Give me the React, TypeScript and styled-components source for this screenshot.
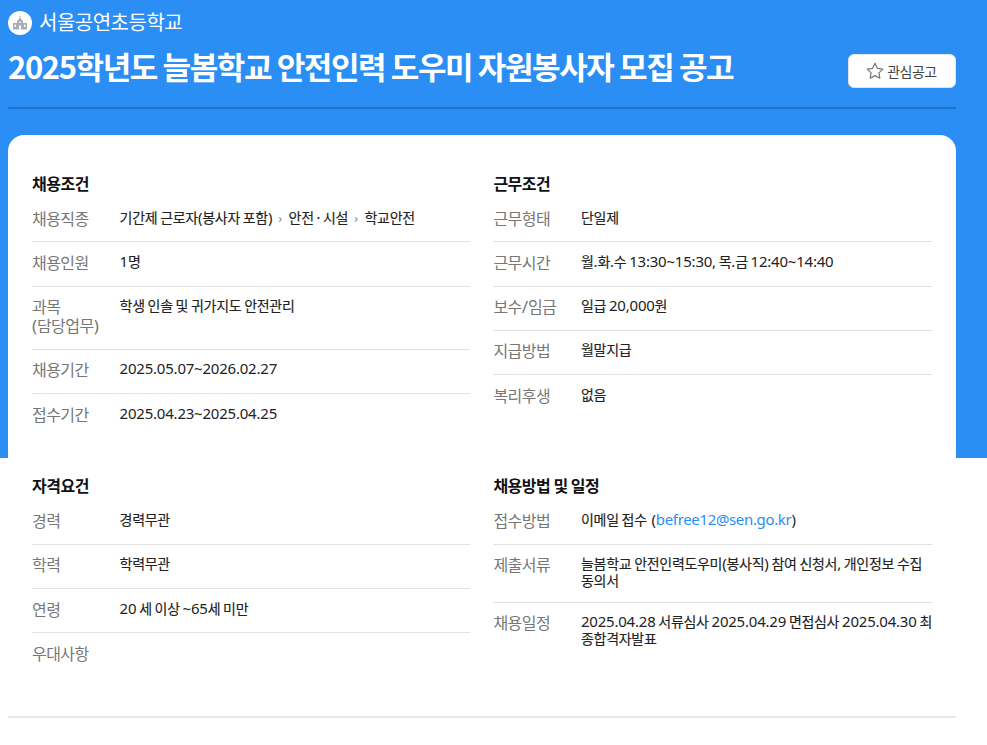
import React from 'react';
import styled, { createGlobalStyle } from 'styled-components';

const GlobalStyle = createGlobalStyle`
html, body {
    margin: 0;
    padding: 0;
}
body {
    background: linear-gradient(#2b8ef4 458px, #fff 458px);
    font-family: "Noto Sans CJK KR", "Noto Sans", sans-serif;
    color: #222;
}
a {
    color: inherit;
    text-decoration: none;
}
`;
const Page = styled.div`
    width: 948px;
    height: 745px;
    margin-left: 8px;
    overflow: hidden;
`;
const SchoolRow = styled.div`
    display: flex;
    align-items: center;
    gap: 7px;
    height: 24px;
    padding-top: 11px;
`;
const SchoolBadge = styled.span`
    width: 24px;
    height: 24px;
    border-radius: 50%;
    background: #fff;
    display: flex;
    align-items: center;
    justify-content: center;
`;
const SchoolName = styled.span`
    color: #fff;
    font-size: 20px;
    letter-spacing: -0.5px;
    line-height: 22px;
    margin-top: -2px;
`;
const TitleRow = styled.div`
    display: flex;
    justify-content: space-between;
    align-items: flex-start;
    height: 64px;
    padding-top: 8px;
    border-bottom: 2px solid #1c74ce;
`;
const Title = styled.h1`
    margin: 0;
    color: #fff;
    font-size: 31px;
    font-weight: 700;
    letter-spacing: -1.4px;
    line-height: 46px;
`;
const FavButton = styled.button`
    width: 108px;
    height: 34px;
    margin-top: 11px;
    border: 1px solid #e3e3e3;
    border-radius: 6px;
    background: #fff;
    color: #444;
    font: 400 14px "Noto Sans CJK KR", sans-serif;
    letter-spacing: -0.5px;
    display: flex;
    align-items: center;
    justify-content: center;
    gap: 2px;
    padding: 0 2px 1px 0;
`;
const Card = styled.div`
    margin-top: 26px;
    background: #fff;
    border-radius: 16px 16px 0 0;
`;
const Grid = styled.div`
    display: grid;
    grid-template-columns: 438px 438.6px;
    column-gap: 23.4px;
    align-content: start;
    padding: 36px 24px 0;
    height: 545px;
    border-bottom: 2px solid #e8e8e8;
`;
const Section = styled.section<{ $height: number }>`
    height: ${(p) => p.$height}px;
`;
const SectionTitle = styled.h2<{ $gap: number }>`
    margin: 0 0 ${(p) => p.$gap}px;
    font-size: 16px;
    font-weight: 700;
    letter-spacing: -0.5px;
    line-height: 24px;
    color: #111;
`;
const Row = styled.div`
    display: flex;
    padding: 10.5px 0 13.9px;
    border-bottom: 1px solid #e2e2e2;
    &:last-child {
        border-bottom: 0;
    }
`;
const Label = styled.div`
    width: 87.6px;
    flex: none;
    font-size: 16px;
    line-height: 18.9px;
    letter-spacing: -0.55px;
    color: #777;
`;
const Value = styled.div`
    flex: 1;
    font-size: 14px;
    line-height: 17px;
    letter-spacing: -0.3px;
    color: #222;
    -webkit-text-stroke: 0.15px #222;
    margin-bottom: -1.4px;
`;
const Latin = styled.span`
    font-family: "Noto Sans", sans-serif;
    font-size: 1.07em;
    line-height: 0;
    letter-spacing: -0.2px;
    -webkit-text-stroke: 0;
`;
const Paren = styled(Latin)`
    margin-left: 2px;
`;
const Crumb = styled.span`
    color: #999;
    font-size: 12px;
    margin: 0 7px 0 6px;
`;
const CrumbText = styled.span`
    word-spacing: -2px;
`;
const Mail = styled.a`
    color: #2b8ef4;
    font-family: "Noto Sans", sans-serif;
    font-size: 1.07em;
    line-height: 0;
    letter-spacing: -0.33px;
    -webkit-text-stroke: 0;
`;

// hangul stays in the CJK face, digits and latin runs get the wider one
const mixed = (text: string) =>
    text.split(/([^\uAC00-\uD7A3\s]+)/).map((part, i) =>
        i % 2 ? <Latin key={i}>{part}</Latin> : part
    );

const sections = [
    {
        title: '채용조건',
        height: 302,
        gap: 3,
        rows: [
            {
                label: '채용직종',
                value: (
                    <>
                        {mixed('기간제 근로자(봉사자 포함)')}
                        <Crumb>›</Crumb>
                        <CrumbText>안전 · 시설</CrumbText>
                        <Crumb>›</Crumb>
                        학교안전
                    </>
                ),
            },
            { label: '채용인원', value: mixed('1명') },
            { label: <>과목<br />{mixed('(담당업무)')}</>, value: '학생 인솔 및 귀가지도 안전관리' },
            { label: '채용기간', value: mixed('2025.05.07~2026.02.27') },
            { label: '접수기간', value: mixed('2025.04.23~2025.04.25') },
        ],
    },
    {
        title: '근무조건',
        height: 302,
        gap: 3,
        rows: [
            { label: '근무형태', value: '단일제' },
            { label: '근무시간', value: mixed('월.화.수 13:30~15:30, 목.금 12:40~14:40') },
            { label: mixed('보수/임금'), value: mixed('일급 20,000원') },
            { label: '지급방법', value: '월말지급' },
            { label: '복리후생', value: '없음' },
        ],
    },
    {
        title: '자격요건',
        height: 240,
        gap: 3.5,
        rows: [
            { label: '경력', value: '경력무관' },
            { label: '학력', value: '학력무관' },
            { label: '연령', value: mixed('20 세 이상 ~65세 미만') },
            { label: '우대사항', value: '' },
        ],
    },
    {
        title: '채용방법 및 일정',
        height: 240,
        gap: 3.5,
        rows: [
            {
                label: '접수방법',
                value: (
                    <>
                        이메일 접수 <Paren>(</Paren>
                        <Mail href="mailto:befree12@sen.go.kr">befree12@sen.go.kr</Mail>
                        {mixed(')')}
                    </>
                ),
            },
            { label: '제출서류', value: mixed('늘봄학교 안전인력도우미(봉사직) 참여 신청서, 개인정보 수집 동의서') },
            { label: '채용일정', value: mixed('2025.04.28 서류심사 2025.04.29 면접심사 2025.04.30 최종합격자발표') },
        ],
    },
];

export default function App() {
    return (
        <Page>
            <GlobalStyle />
            <SchoolRow>
                <SchoolBadge>
                    <svg width="14" height="14" viewBox="0 0 14 14">
                        <path fill="#a9adb5" d="M6.500 0h1v2.300L10 5v2h4v6.500H0V7h4V5l2.500-2.700z" />
                        <path fill="#fff" d="M6 9.500h2v4H6zM1.500 8.800H3v2H1.500zM11 8.800h1.500v2H11zM6.300 5.500h1.400v1.500H6.300z" />
                    </svg>
                </SchoolBadge>
                <SchoolName>서울공연초등학교</SchoolName>
            </SchoolRow>
            <TitleRow>
                <Title>2025학년도 늘봄학교 안전인력 도우미 자원봉사자 모집 공고</Title>
                <FavButton type="button">
                    <svg width="20" height="20" viewBox="0 0 24 24" fill="none" stroke="#777" strokeWidth="1.500" strokeLinejoin="round">
                        <path d="M12 2.800l2.900 6 6.500.9-4.700 4.500 1.100 6.500L12 17.600l-5.800 3.100 1.100-6.500-4.700-4.500 6.500-.9z" />
                    </svg>
                    관심공고
                </FavButton>
            </TitleRow>
            <Card>
                <Grid>
                    {sections.map((section) => (
                        <Section key={section.title} $height={section.height}>
                            <SectionTitle $gap={section.gap}>{section.title}</SectionTitle>
                            {section.rows.map((row, i) => (
                                <Row key={i}>
                                    <Label>{row.label}</Label>
                                    <Value>{row.value}</Value>
                                </Row>
                            ))}
                        </Section>
                    ))}
                </Grid>
            </Card>
        </Page>
    );
}
